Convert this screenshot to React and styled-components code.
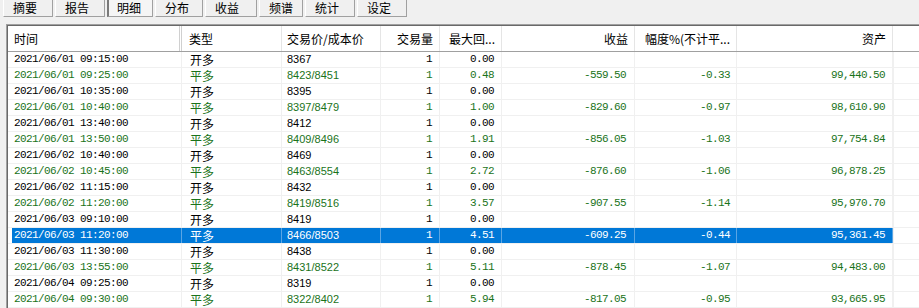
import React from "react"
import styled, { createGlobalStyle } from "styled-components"

const GlobalStyle = createGlobalStyle`
  html, body {
    margin: 0;
    padding: 0;
    background: #f0f0f0;
    overflow: hidden;
  }
`

const COLS = "174px 100px 99px 59px 62px 133px 102px 156px 1fr"

const Page = styled.div`
  width: 919px;
  height: 308px;
  background: #f0f0f0;
  font-family: "Noto Sans CJK SC", "Liberation Sans", sans-serif;
  overflow: hidden;
`

const TabBar = styled.div`
  display: flex;
  height: 17px;
  padding-left: 3px;
`

const Tab = styled.div`
  box-sizing: border-box;
  width: ${props => props.w - 2}px;
  margin-right: 2px;
  height: 17px;
  padding-left: ${props => (props.active ? 8 : 9)}px;
  font-size: 12px;
  line-height: 15px;
  color: #000;
  background: ${props => (props.active ? "#f5f5f5" : "#f0f0f0")};
  border-left: ${props => (props.active ? "2px solid #7a7a7a" : "1px solid #ffffff")};
  border-right: 1px solid #a0a0a0;
  border-bottom: 1px solid #a0a0a0;
`

const Panel = styled.div`
  margin: 7px 0 0 6px;
  border-top: 1px solid #a0a0a0;
  border-left: 1px solid #a0a0a0;
  box-shadow: inset 1px 1px 0 #696969;
  padding: 1px 0 0 1px;
  background: #ffffff;
  height: 300px;
`

const Row = styled.div`
  display: grid;
  grid-template-columns: ${COLS};
  height: ${props => (props.header ? 25 : 15)}px;
  border-bottom: 1px solid ${props => (props.header ? "#a0a0a0" : "#f0f0f0")};
`

const HeadCell = styled.div`
  box-sizing: border-box;
  padding: 0 ${props => (props.right ? 6 : 0)}px 0 ${props => props.pl || 6}px;
  font-size: 12px;
  line-height: 25px;
  color: #000;
  text-align: ${props => (props.right ? "right" : "left")};
  border-right: ${props => (props.double ? "3px double #d0d0d0" : "1px solid #e5e5e5")};
  white-space: nowrap;
  overflow: hidden;
`

const Cell = styled.div`
  box-sizing: border-box;
  padding: 0 ${props => (props.right ? props.pr || 7 : 0)}px 0 ${props => (props.right ? 0 : props.pl || 6)}px;
  font-family: ${props =>
    props.kind === "mono"
      ? '"Liberation Mono", "DejaVu Sans Mono", monospace'
      : props.kind === "sans"
      ? '"Liberation Sans", Arial, sans-serif'
      : '"Noto Sans CJK SC", sans-serif'};
  font-size: ${props => (props.kind === "mono" ? 11 : props.kind === "sans" ? 11 : 12)}px;
  letter-spacing: ${props => (props.kind === "mono" ? "-0.6px" : "normal")};
  line-height: 15px;
  text-align: ${props => (props.right ? "right" : "left")};
  white-space: nowrap;
  overflow: hidden;
  color: ${props => (props.selected ? "#ffffff" : props.green ? "#1a731a" : "#000000")};
  background: ${props =>
    props.selected
      ? props.first
        ? "linear-gradient(to right, transparent 4px, #0078d7 4px)"
        : "#0078d7"
      : "transparent"};
  border-right: 1px solid ${props => (props.selected ? "#5aa5e4" : "#f0f0f0")};
`

const Filler = styled.div`
  border-left: 1px solid #f0f0f0;
`

const tabs = [
  { label: "摘要", w: 52 },
  { label: "报告", w: 52 },
  { label: "明细", w: 48, active: true },
  { label: "分布", w: 50 },
  { label: "收益", w: 54 },
  { label: "频谱", w: 46 },
  { label: "统计", w: 52 },
  { label: "设定", w: 52 },
]

const rows = [
  ["2021/06/01 09:15:00", "开多", "8367", "0.00"],
  ["2021/06/01 09:25:00", "平多", "8423/8451", "0.48", "-559.50", "-0.33", "99,440.50"],
  ["2021/06/01 10:35:00", "开多", "8395", "0.00"],
  ["2021/06/01 10:40:00", "平多", "8397/8479", "1.00", "-829.60", "-0.97", "98,610.90"],
  ["2021/06/01 13:40:00", "开多", "8412", "0.00"],
  ["2021/06/01 13:50:00", "平多", "8409/8496", "1.91", "-856.05", "-1.03", "97,754.84"],
  ["2021/06/02 10:40:00", "开多", "8469", "0.00"],
  ["2021/06/02 10:45:00", "平多", "8463/8554", "2.72", "-876.60", "-1.06", "96,878.25"],
  ["2021/06/02 11:15:00", "开多", "8432", "0.00"],
  ["2021/06/02 11:20:00", "平多", "8419/8516", "3.57", "-907.55", "-1.14", "95,970.70"],
  ["2021/06/03 09:10:00", "开多", "8419", "0.00"],
  ["2021/06/03 11:20:00", "平多", "8466/8503", "4.51", "-609.25", "-0.44", "95,361.45"],
  ["2021/06/03 11:30:00", "开多", "8438", "0.00"],
  ["2021/06/03 13:55:00", "平多", "8431/8522", "5.11", "-878.45", "-1.07", "94,483.00"],
  ["2021/06/04 09:25:00", "开多", "8319", "0.00"],
  ["2021/06/04 09:30:00", "平多", "8322/8402", "5.94", "-817.05", "-0.95", "93,665.95"],
]

const SELECTED = 11

const App = () => {
  return (
    <Page>
      <GlobalStyle />
      <TabBar>
        {tabs.map(t => (
          <Tab key={t.label} w={t.w} active={t.active}>
            {t.label}
          </Tab>
        ))}
      </TabBar>
      <Panel>
        <Row header>
          <HeadCell double>时间</HeadCell>
          <HeadCell pl={7}>类型</HeadCell>
          <HeadCell pl={5}>交易价/成本价</HeadCell>
          <HeadCell right>交易量</HeadCell>
          <HeadCell right>最大回...</HeadCell>
          <HeadCell right>收益</HeadCell>
          <HeadCell right>幅度%(不计平...</HeadCell>
          <HeadCell right>资产</HeadCell>
          <div />
        </Row>
        {rows.map((r, i) => {
          const green = r[1] === "平多"
          const sel = i === SELECTED
          return (
            <Row key={i}>
              <Cell kind="mono" green={green} selected={sel} first>
                {r[0]}
              </Cell>
              <Cell pl={8} green={green} selected={sel}>
                {r[1]}
              </Cell>
              <Cell kind="sans" pl={5} green={green} selected={sel}>
                {r[2]}
              </Cell>
              <Cell kind="mono" right pr={7} green={green} selected={sel}>
                1
              </Cell>
              <Cell kind="mono" right pr={7} green={green} selected={sel}>
                {r[3]}
              </Cell>
              <Cell kind="mono" right pr={8} green={green} selected={sel}>
                {r[4] || ""}
              </Cell>
              <Cell kind="mono" right pr={6} green={green} selected={sel}>
                {r[5] || ""}
              </Cell>
              <Cell kind="mono" right pr={7} green={green} selected={sel}>
                {r[6] || ""}
              </Cell>
              <Filler />
            </Row>
          )
        })}
      </Panel>
    </Page>
  )
}

export default App
